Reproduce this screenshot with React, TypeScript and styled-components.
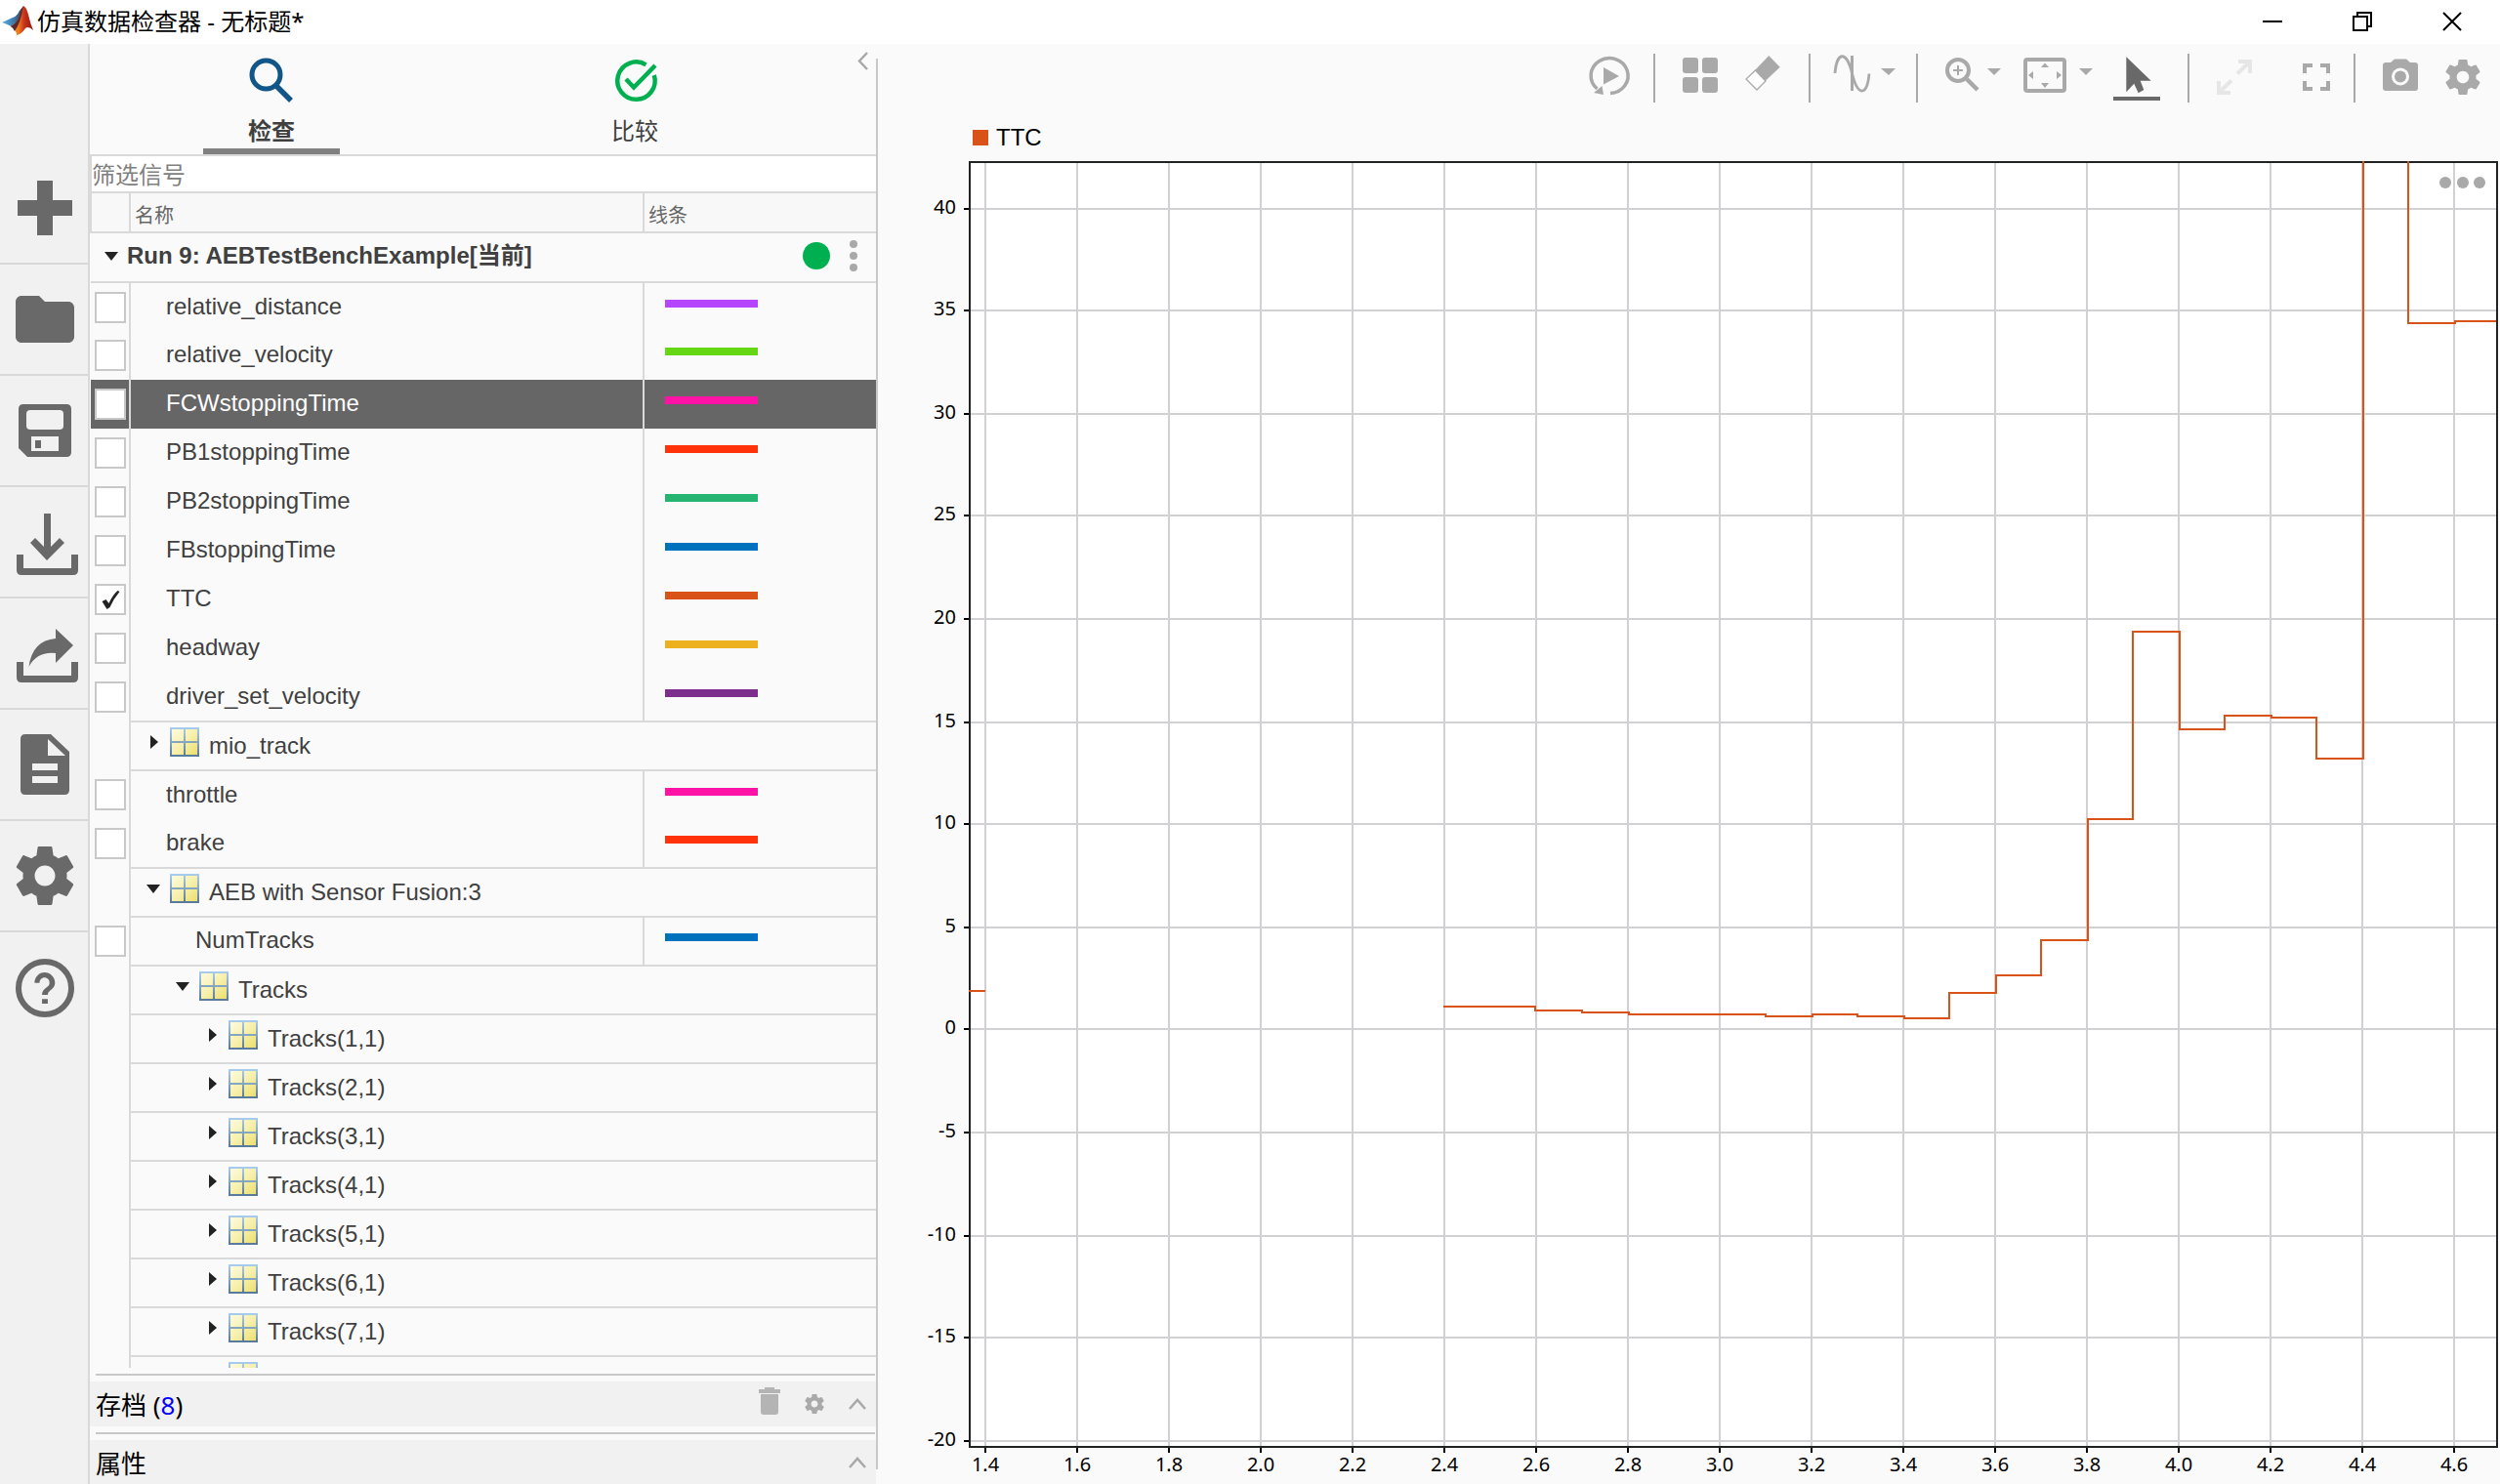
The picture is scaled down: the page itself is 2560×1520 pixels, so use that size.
import React from 'react';
import styled, { createGlobalStyle } from 'styled-components';

const LINE = '#d9d9d9';
const ICON = '#a9a9a9';
const DARK = '#696969';
const SIGNAL = '#d95319';

const arial = `"Liberation Sans", "Noto Sans CJK SC", sans-serif`;
const ui = `"Noto Sans", "Noto Sans CJK SC", sans-serif`;

const GlobalStyle = createGlobalStyle`
  * { box-sizing: border-box; }
  body { margin: 0; background: #fafafa; color: #404040; font-family: ${arial}; }
  button { margin: 0; padding: 0; border: 0; background: none; color: inherit; font: inherit; }
  svg { display: block; }
`;

const Window = styled.div`
  display: flex;
  flex-direction: column;
  height: 100vh;
  overflow: hidden;
`;

const TitleBar = styled.header`
  display: flex;
  align-items: center;
  height: 45px;
  flex: none;
  padding: 0 3px 2px 2px;
  background: #fff;
  color: #000;
`;

const Title = styled.h1`
  flex: 1;
  margin: 0;
  font: 400 24px/32px ${ui};
`;

const WindowButton = styled.button`
  width: 92px;
  height: 42px;
  svg { margin: auto; }
`;

const Body = styled.div`
  display: flex;
  flex: 1;
  min-height: 0;
`;

const Rail = styled.nav`
  flex: none;
  width: 92px;
  padding-top: 112px;
  background: #f1f1f1;
  border-right: 2px solid ${LINE};
`;

const RailButton = styled.button`
  display: block;
  width: 90px;
  height: 114px;
  border-bottom: 2px solid ${LINE};
  color: ${DARK};
  &:last-child { border-bottom: 0; }
`;

const Panel = styled.section`
  display: flex;
  flex-direction: column;
  flex: none;
  width: 805px;
`;

const Splitter = styled.div`
  flex: none;
  width: 2px;
  margin: 15px 0;
  background: #c8c8c8;
`;

const Tabs = styled.div`
  display: flex;
  flex: none;
  height: 115px;
  border-bottom: 2px solid ${LINE};
`;

const TabSlot = styled.div`
  display: flex;
  justify-content: center;
  width: 372px;
`;

const Tab = styled.button<{ $active?: boolean }>`
  display: flex;
  flex-direction: column;
  align-items: center;
  gap: 10px;
  width: 140px;
  padding-top: 12px;
  border-bottom: 6px solid ${(p) => (p.$active ? '#808080' : 'transparent')};
  font-size: 24px;
  line-height: 32px;
  font-weight: ${(p) => (p.$active ? 700 : 400)};
`;

const CollapseButton = styled.button`
  flex: 1;
  align-self: flex-start;
`;

const Filter = styled.input`
  flex: none;
  width: 100%;
  height: 38px;
  padding: 3px 0 0;
  border: 0 solid ${LINE};
  border-width: 0 0 2px 2px;
  background: #fff;
  outline: 0;
  font: 24px/32px ${arial};
  &::placeholder { color: #808080; opacity: 1; }
`;

const Scroller = styled.div`
  flex: 1;
  min-height: 0;
  overflow: hidden;
`;

const SignalTable = styled.table`
  width: 100%;
  table-layout: fixed;
  border-collapse: collapse;
  font-size: 24px;
  line-height: 28px;
`;

const CheckCol = styled.col`width: 40px;`;
const NameCol = styled.col`width: 526px;`;

const HeadCell = styled.th`
  height: 40px;
  padding: 6px 0 0 4px;
  border: 2px solid ${LINE};
  border-top: 0;
  border-right: 0;
  background: #f8f8f8;
  color: #666;
  font-size: 20px;
  line-height: 24px;
  font-weight: 400;
  text-align: left;
`;

const RunCell = styled.td`
  height: 51px;
  padding: 0;
  border-bottom: 2px solid ${LINE};
`;

const RunRow = styled.div`
  display: flex;
  align-items: center;
  padding: 0 11px 4px 13px;
  font-weight: 700;
`;

const RunName = styled.span`
  flex: 1;
  margin-left: 8px;
`;

const StatusDot = styled.span`
  width: 28px;
  height: 28px;
  border-radius: 50%;
  background: #00b050;
`;

const KebabButton = styled.button`
  margin-left: 12px;
`;

const Row = styled.tr<{ $selected?: boolean }>`
  background: ${(p) => (p.$selected ? '#666' : 'transparent')};
  color: ${(p) => (p.$selected ? '#fff' : 'inherit')};
`;

const CheckCell = styled.td`
  height: 50px;
  padding: 0;
  border-right: 2px solid ${LINE};
`;

const CheckBox = styled.input`
  display: block;
  appearance: none;
  width: 32px;
  height: 32px;
  margin: 0 auto;
  border: 2px solid #c8c8c8;
  background: #fff;
  &:checked::before {
    content: '';
    display: block;
    width: 28px;
    height: 28px;
    background: #222;
    clip-path: path('M6 16 L10 14 L13 18 Q17 9 22 5 L24 6 Q18 13 14 22 L11 24 Z');
  }
`;

const NameCell = styled.td<{ $depth: number }>`
  padding: 0 0 2px ${(p) => 36 + p.$depth * 30}px;
  border-right: 2px solid ${LINE};
`;

const GroupCell = styled.td`
  padding: 0;
  border: 2px solid ${LINE};
  border-right: 0;
`;

const GroupRow = styled.div<{ $depth: number }>`
  display: flex;
  align-items: center;
  height: 46px;
  padding-left: ${(p) => 15 + p.$depth * 30}px;
`;

const CaretButton = styled.button`
  width: 16px;
  margin: 0 9px 8px 0;
`;

const BusIcon = styled.svg`
  width: 30px;
  height: 30px;
  margin: 0 10px 8px 0;
`;

const LineCell = styled.td`
  padding: 0 0 8px 21px;
`;

const Swatch = styled.span<{ $color: string }>`
  display: block;
  width: 95px;
  height: 8px;
  background: ${(p) => p.$color};
`;

const Rule = styled.hr`
  flex: none;
  width: 798px;
  height: 2px;
  margin: 6px 0 6px 6px;
  border: 0;
  background: #c8c8c8;
`;

const Drawer = styled.div`
  display: flex;
  align-items: center;
  gap: 15px;
  flex: none;
  height: 46px;
  padding: 0 10px 0 6px;
  background: #f1f1f1;
  color: #000;
  font: 26px/36px ${ui};
  &:last-child { height: 45px; }
`;

const DrawerTitle = styled.span`
  flex: 1;
  padding-top: 2px;
`;

const CountLink = styled.a`
  color: #00f;
  text-decoration: none;
`;

const Viewer = styled.main`
  display: flex;
  flex-direction: column;
  flex: 1;
  min-width: 0;
`;

const Toolbar = styled.div`
  display: flex;
  justify-content: flex-end;
  flex: none;
  height: 65px;
  padding-top: 5px;
`;

const ToolButton = styled.button<{ $tone?: string }>`
  height: 60px;
  color: ${(p) => p.$tone ?? ICON};
`;

const Separator = styled.span`
  width: 2px;
  height: 50px;
  margin-top: 5px;
  background: ${ICON};
`;

const Legend = styled.div`
  display: flex;
  align-items: center;
  gap: 8px;
  flex: none;
  height: 55px;
  padding: 7px 0 0 97px;
  color: #000;
  font: 24px/32px ${arial};
`;

const LegendMark = styled.span`
  width: 16px;
  height: 16px;
  background: ${SIGNAL};
`;

const ChartBox = styled.div`
  position: relative;
  flex: 1;
  min-height: 0;
`;

const Chart = styled.svg`
  width: 100%;
  height: 100%;
`;

const AxisText = styled.text`
  font: 20px ${ui};
  fill: #000;
`;

const ChartMenu = styled.button`
  position: absolute;
  top: 9px;
  right: 9px;
  color: ${ICON};
`;

/* ---------- left rail ---------- */

const railIcons: { label: string; art: React.ReactNode }[] = [
  { label: '新建', art: <path d="M38 28H54V48H74V64H54V84H38V64H18V48H38Z" /> },
  {
    label: '打开',
    art: (
      <path
        transform="translate(10 20) scale(3)"
        d="M10 4H4c-1.1 0-1.99.9-1.99 2L2 18c0 1.1.9 2 2 2h16c1.1 0 2-.9 2-2V8c0-1.1-.9-2-2-2h-8l-2-2z"
      />
    ),
  },
  {
    label: '保存',
    art: (
      <>
        <path d="M24 29H68Q73 29 73 34V78Q73 83 68 83H28L19 74V34Q19 29 24 29Z" />
        <rect x="27" y="35" width="38" height="20" rx="4" fill="#f1f1f1" />
        <rect x="32" y="62" width="28" height="15" fill="#f1f1f1" />
        <rect x="36" y="66" width="6" height="8" />
      </>
    ),
  },
  {
    label: '导入',
    art: (
      <>
        <path d="M17 69H24V83H73V69H80V85Q80 90 75 90H22Q17 90 17 85Z" />
        <path d="M45 27H52V61L61 52L66 57L48 75L31 57L36 52L45 61Z" />
      </>
    ),
  },
  {
    label: '导出',
    art: (
      <>
        <path d="M17 65H24V79H73V65H80V81Q80 86 75 86H22Q17 86 17 81Z" />
        <path d="M57 31L75 48L57 66V56Q38 54 29.500 70Q33 43 57 41Z" />
      </>
    ),
  },
  {
    label: '报告',
    art: (
      <>
        <path d="M26 25H52L71 43V82Q71 87 66 87H26Q21 87 21 82V30Q21 25 26 25Z" />
        <path d="M49 30V47H67Z" fill="#f1f1f1" />
        <path d="M33 55H59V62H33ZM33 68H59V75H33Z" fill="#f1f1f1" />
      </>
    ),
  },
  { label: '预设项', art: <g transform="translate(10 20) scale(3)"><GearShape /></g> },
  {
    label: '帮助',
    art: (
      <>
        <circle cx="46" cy="56" r="27" fill="none" stroke="currentColor" strokeWidth="6" />
        <path
          transform="translate(15 24) scale(2.55 2.67)"
          d="M11 18h2.300v-1.800h-2.300zM12 6c-2.210 0-4 1.790-4 4h2c0-1.100.9-2 2-2s2 .9 2 2c0 2-3 1.750-3 4.600h2.300c0-1.900 2.900-2.100 2.900-4.600 0-2.210-1.890-4-4.200-4z"
        />
      </>
    ),
  },
];

function GearShape() {
  return (
    <path d="M19.430 12.980c.04-.32.07-.64.07-.98s-.03-.66-.07-.98l2.110-1.650c.19-.15.24-.42.12-.64l-2-3.460c-.12-.22-.39-.3-.61-.22l-2.490 1c-.52-.4-1.080-.73-1.690-.98l-.38-2.650C14.460 2.180 14.250 2 14 2h-4c-.25 0-.46.18-.49.42l-.38 2.650c-.61.25-1.170.59-1.690.98l-2.490-1c-.23-.09-.49 0-.61.22l-2 3.460c-.13.22-.07.49.12.64l2.110 1.650c-.04.32-.07.65-.07.98s.03.66.07.98l-2.110 1.650c-.19.15-.24.42-.12.64l2 3.460c.12.22.39.3.61.22l2.490-1c.52.4 1.080.73 1.690.98l.38 2.650c.03.24.24.42.49.42h4c.25 0 .46-.18.49-.42l.38-2.650c.61-.25 1.170-.59 1.690-.98l2.490 1c.23.09.49 0 .61-.22l2-3.460c.12-.22.07-.49-.12-.64l-2.110-1.650zM12 15.500c-1.930 0-3.500-1.570-3.500-3.500s1.570-3.500 3.500-3.500 3.500 1.570 3.500 3.500-1.570 3.500-3.500 3.500z" />
  );
}

function Logo() {
  return (
    <svg width="36" height="36" viewBox="0 0 36 36" aria-hidden="true">
      <defs>
        <linearGradient id="peak" x1="0" x2="1" y1="0" y2="0">
          <stop offset="0" stopColor="#f6a623" />
          <stop offset="0.35" stopColor="#ef7a1c" />
          <stop offset="0.6" stopColor="#c8321c" />
          <stop offset="1" stopColor="#8e1a12" />
        </linearGradient>
        <linearGradient id="slope" x1="0" x2="1" y1="0" y2="0">
          <stop offset="0" stopColor="#59b0e6" />
          <stop offset="0.6" stopColor="#3b74a8" />
          <stop offset="1" stopColor="#2b3a52" />
        </linearGradient>
      </defs>
      <path d="M0 19L11 14Q15 13 18 7Q20 4 22 3L18 18L12 25Q9 22 0 19Z" fill="url(#slope)" />
      <path d="M22 2Q25 3 27 11Q29 20 32 27Q27 22 24 25Q20 31 15 32Q15 27 9 23Q15 20 18 12Q20 4 22 2Z" fill="url(#peak)" />
      <path d="M22 2Q20 4 18 12Q15 20 9 23Q12 25 13 28Q19 20 22 2Z" fill="#5c2a2e" />
    </svg>
  );
}

/* ---------- signal table ---------- */

type Item =
  | { kind: 'signal'; name: string; color: string; depth?: number; checked?: boolean; selected?: boolean }
  | { kind: 'group'; name: string; depth: number; open?: boolean };

const items: Item[] = [
  { kind: 'signal', name: 'relative_distance', color: '#b545ff' },
  { kind: 'signal', name: 'relative_velocity', color: '#65d614' },
  { kind: 'signal', name: 'FCWstoppingTime', color: '#ff13a6', selected: true },
  { kind: 'signal', name: 'PB1stoppingTime', color: '#ff320a' },
  { kind: 'signal', name: 'PB2stoppingTime', color: '#25b573' },
  { kind: 'signal', name: 'FBstoppingTime', color: '#0072bd' },
  { kind: 'signal', name: 'TTC', color: '#d95319', checked: true },
  { kind: 'signal', name: 'headway', color: '#edb120' },
  { kind: 'signal', name: 'driver_set_velocity', color: '#7e2f8e' },
  { kind: 'group', name: 'mio_track', depth: 0 },
  { kind: 'signal', name: 'throttle', color: '#ff13a6' },
  { kind: 'signal', name: 'brake', color: '#ff320a' },
  { kind: 'group', name: 'AEB with Sensor Fusion:3', depth: 0, open: true },
  { kind: 'signal', name: 'NumTracks', color: '#0072bd', depth: 1 },
  { kind: 'group', name: 'Tracks', depth: 1, open: true },
  ...[1, 2, 3, 4, 5, 6, 7].map((n): Item => ({ kind: 'group', name: `Tracks(${n},1)`, depth: 2 })),
  { kind: 'group', name: '', depth: 2 },
];

function Caret({ open }: { open?: boolean }) {
  return (
    <svg width="16" height="16" viewBox="0 0 16 16" fill="#222" aria-hidden="true">
      <path d={open ? 'M1 4H15L8 13Z' : 'M5 1L13 8L5 15Z'} />
    </svg>
  );
}

function Bus() {
  return (
    <BusIcon viewBox="0 0 30 30" aria-hidden="true">
      <defs>
        <linearGradient id="busFrame" x1="0" x2="0" y1="0" y2="1">
          <stop offset="0" stopColor="#a9cdef" />
          <stop offset="0.5" stopColor="#84a6be" />
          <stop offset="1" stopColor="#56779a" />
        </linearGradient>
        <linearGradient id="busPane" gradientUnits="userSpaceOnUse" x1="0" y1="0" x2="30" y2="30">
          <stop offset="0" stopColor="#fffde6" />
          <stop offset="0.5" stopColor="#f7f0ae" />
          <stop offset="1" stopColor="#ebdc62" />
        </linearGradient>
      </defs>
      <rect width="30" height="30" fill="url(#busFrame)" />
      <path d="M2 2H14V14H2ZM16 2H28V14H16ZM2 16H14V28H2ZM16 16H28V28H16Z" fill="url(#busPane)" />
    </BusIcon>
  );
}

function ItemRow({ item, index }: { item: Item; index: number }) {
  if (item.kind === 'group') {
    return (
      <Row>
        <CheckCell />
        <GroupCell colSpan={2}>
          <GroupRow $depth={item.depth}>
            <CaretButton aria-label={item.open ? '折叠' : '展开'}>
              <Caret open={item.open} />
            </CaretButton>
            <Bus />
            <span>{item.name}</span>
          </GroupRow>
        </GroupCell>
      </Row>
    );
  }
  const id = `signal-${index}`;
  return (
    <Row $selected={item.selected}>
      <CheckCell>
        <CheckBox type="checkbox" id={id} defaultChecked={item.checked} />
      </CheckCell>
      <NameCell $depth={item.depth ?? 0}>
        <label htmlFor={id}>{item.name}</label>
      </NameCell>
      <LineCell>
        <Swatch $color={item.color} />
      </LineCell>
    </Row>
  );
}

/* ---------- toolbar ---------- */

function Tool({ label, width, tone, children }: { label: string; width: number; tone?: string; children: React.ReactNode }) {
  return (
    <ToolButton aria-label={label} $tone={tone}>
      <svg width={width} height="60" viewBox={`0 0 ${width} 60`} fill="currentColor">
        {children}
      </svg>
    </ToolButton>
  );
}

function ViewerToolbar() {
  return (
    <Toolbar>
      <Tool label="重播" width={75}>
        <path d="M31 45.500A19 18 0 1 0 17.500 41" fill="none" stroke="currentColor" strokeWidth="3.500" />
        <path d="M14 45L24 47L22.500 38Z" />
        <path d="M24 19L40 28L24 36.500Z" />
      </Tool>
      <Separator />
      <Tool label="布局" width={82}>
        <rect x="28" y="9" width="16" height="16" rx="3" />
        <rect x="48" y="9" width="16" height="16" rx="3" />
        <rect x="28" y="29" width="16" height="16" rx="3" />
        <rect x="48" y="29" width="16" height="16" rx="3" />
      </Tool>
      <Tool label="清除" width={75}>
        <path d="M34.300 7L45.700 18.700L30 33.500L20 22Z" />
        <path d="M20.500 22L11 31L22 42L31 33Z" fill="#fff" stroke="currentColor" strokeWidth="1.300" />
      </Tool>
      <Separator />
      <Tool label="游标" width={108}>
        <path d="M25 25C27 2 37 2 42.500 25C48 48 58 50 60 25.500" fill="none" stroke="currentColor" strokeWidth="2.800" />
        <rect x="41" y="7" width="3" height="36" />
        <path d="M72 20H87L80 27Z" />
      </Tool>
      <Separator />
      <Tool label="缩放" width={98}>
        <circle cx="41" cy="22" r="11" fill="none" stroke="currentColor" strokeWidth="4" />
        <path d="M36 22H46M41 17V27" stroke="currentColor" strokeWidth="2" />
        <path d="M50 31L61 42" stroke="currentColor" strokeWidth="4.500" />
        <path d="M71 20H85L78 27Z" />
      </Tool>
      <Tool label="适应视图" width={94}>
        <rect x="12" y="11" width="40" height="32" rx="2" fill="none" stroke="currentColor" strokeWidth="4" />
        <path d="M28 19H36L32 14.500ZM28 35H36L32 40ZM20 23V31L15 27ZM44 23V31L49 27Z" />
        <path d="M67 20H81L74 27Z" />
      </Tool>
      <Tool label="选择" width={84} tone={DARK}>
        <path d="M21.300 8.300L46.700 32.700H35.700L39.300 42L33.700 45.300L29.300 35.700L21.300 44.300Z" />
        <rect x="8" y="49" width="48" height="4" />
      </Tool>
      <Separator />
      <Tool label="最大化" width={94} tone="#e6e6e6">
        <path d="M50 13H62V25M61 14L49 25.500M30 33V45H42M31 44L43 32.500" fill="none" stroke="currentColor" strokeWidth="4" />
      </Tool>
      <Tool label="全屏" width={74}>
        <path d="M24 25V17H32M40 17H48V25M48 33V41H40M32 41H24V33" fill="none" stroke="currentColor" strokeWidth="4" />
      </Tool>
      <Separator />
      <Tool label="快照" width={80}>
        <path d="M31 14H36L40 10.500H52L56 14H61Q64 14 64 17V40Q64 43 61 43H31Q28 43 28 40V17Q28 14 31 14Z" />
        <circle cx="46" cy="28.500" r="9" fill="#fafafa" />
        <circle cx="46" cy="28.500" r="6" />
      </Tool>
      <Tool label="设置" width={68}>
        <g transform="translate(8.400 7.400) scale(1.800)">
          <GearShape />
        </g>
      </Tool>
    </Toolbar>
  );
}

/* ---------- chart ---------- */

const X_TICKS = Array.from({ length: 17 }, (_, i) => i);
const Y_TICKS = [40, 35, 30, 25, 20, 15, 10, 5, 0, -5, -10, -15, -20];
const tickX = (i: number) => 110 + i * 94;
const tickY = (v: number) => 2 * Math.round((889.9 - v * 21.04) / 2 - 0.5) + 1;

/* [start of the step, level] pairs of the stair plot */
const steps: [number, number][] = [
  [579, 866], [673, 870], [721, 872], [769, 874], [909, 876], [957, 874], [1003, 876],
  [1051, 878], [1097, 852], [1145, 834], [1191, 798], [1239, 674], [1285, 482], [1333, 582],
  [1379, 568], [1427, 570], [1473, 612], [1521, 0], [1567, 166], [1615, 164],
];

const stairs = steps.map(([x, y], i) => `${i ? `H${x}V${y}` : `M${x} ${y}`}`).join('') + 'H1657';
const [beforePeak, afterPeak] = stairs.split('H1567');

function TtcChart() {
  return (
    <Chart viewBox="0 0 1661 1355" preserveAspectRatio="xMidYMin meet" role="img" aria-label="TTC">
      <rect x="94" y="1" width="1564" height="1316" fill="#fff" />
      <g stroke="#d1d1d3" strokeWidth="2">
        {X_TICKS.map((i) => <path key={i} d={`M${tickX(i)} 1V1317`} />)}
        {Y_TICKS.map((v) => <path key={v} d={`M94 ${tickY(v)}H1658`} />)}
      </g>
      <g stroke="#000" strokeWidth="2">
        {X_TICKS.map((i) => <path key={i} d={`M${tickX(i)} 1318V1323`} />)}
        {Y_TICKS.map((v) => <path key={v} d={`M88 ${tickY(v)}H93`} />)}
      </g>
      <rect x="94" y="1" width="1564" height="1316" fill="none" stroke="#1f2323" strokeWidth="2" />
      <g fill="none" stroke={SIGNAL} strokeWidth="2">
        <path d="M93 850H110" />
        <path d={beforePeak} />
        <path d={`M1567 0${afterPeak}`} />
      </g>
      {X_TICKS.map((i) => (
        <AxisText key={i} x={tickX(i)} y="1342" textAnchor="middle">{(1.4 + i * 0.2).toFixed(1)}</AxisText>
      ))}
      {Y_TICKS.map((v) => (
        <AxisText key={v} x="80" y={tickY(v) + 5} textAnchor="end">{v}</AxisText>
      ))}
    </Chart>
  );
}

function Chevron() {
  return (
    <svg width="18" height="12" viewBox="0 0 18 12" fill="none" stroke={ICON} strokeWidth="2.500">
      <path d="M1 11L9 2L17 11" />
    </svg>
  );
}

export default function App() {
  return (
    <Window>
      <GlobalStyle />
      <TitleBar>
        <Logo />
        <Title>仿真数据检查器 - 无标题*</Title>
        <WindowButton aria-label="最小化">
          <svg width="20" height="20" viewBox="0 0 20 20"><path d="M0 10H20" stroke="#000" strokeWidth="2" /></svg>
        </WindowButton>
        <WindowButton aria-label="还原">
          <svg width="20" height="20" viewBox="0 0 20 20" fill="none" stroke="#000" strokeWidth="2">
            <path d="M1 5H15V19H1ZM5 5V1H19V15H15" />
          </svg>
        </WindowButton>
        <WindowButton aria-label="关闭">
          <svg width="20" height="20" viewBox="0 0 20 20"><path d="M1 1L19 19M19 1L1 19" stroke="#000" strokeWidth="2" /></svg>
        </WindowButton>
      </TitleBar>

      <Body>
        <Rail>
          {railIcons.map((icon) => (
            <RailButton key={icon.label} aria-label={icon.label}>
              <svg width="90" height="112" viewBox="0 0 90 112" fill="currentColor">{icon.art}</svg>
            </RailButton>
          ))}
        </Rail>

        <Panel>
          <Tabs>
            <TabSlot>
              <Tab $active>
                <svg width="52" height="52" viewBox="0 0 52 52" fill="none" stroke="#125687" strokeWidth="5">
                  <circle cx="20.500" cy="19.500" r="14.500" />
                  <path d="M30 30L46 46" strokeWidth="5.500" />
                </svg>
                检查
              </Tab>
            </TabSlot>
            <TabSlot>
              <Tab>
                <svg width="52" height="52" viewBox="0 0 52 52" fill="none" stroke="#00b050" strokeWidth="4.500">
                  <path d="M45.800 20A19.200 19.200 0 1 1 37.500 9.300" />
                  <path d="M17 24L25 32.500L47 10" />
                </svg>
                比较
              </Tab>
            </TabSlot>
            <CollapseButton aria-label="折叠面板">
              <svg width="61" height="34" viewBox="0 0 61 34" fill="none" stroke={ICON} strokeWidth="2.500">
                <path d="M52 9L44 17.500L52 26" />
              </svg>
            </CollapseButton>
          </Tabs>
          <Filter type="text" placeholder="筛选信号" aria-label="筛选信号" />
          <Scroller>
            <SignalTable>
              <colgroup>
                <CheckCol />
                <NameCol />
                <col />
              </colgroup>
              <thead>
                <tr>
                  <HeadCell />
                  <HeadCell>名称</HeadCell>
                  <HeadCell>线条</HeadCell>
                </tr>
              </thead>
              <tbody>
                <tr>
                  <RunCell colSpan={3}>
                    <RunRow>
                      <button aria-label="折叠"><Caret open /></button>
                      <RunName>Run 9: AEBTestBenchExample[当前]</RunName>
                      <StatusDot />
                      <KebabButton aria-label="更多">
                        <svg width="24" height="32" viewBox="0 0 24 32" fill={ICON}>
                          <circle cx="12" cy="4" r="4" />
                          <circle cx="12" cy="16" r="4" />
                          <circle cx="12" cy="28" r="4" />
                        </svg>
                      </KebabButton>
                    </RunRow>
                  </RunCell>
                </tr>
                {items.map((item, i) => <ItemRow key={i} item={item} index={i} />)}
              </tbody>
            </SignalTable>
          </Scroller>
          <Rule />
          <Drawer>
            <DrawerTitle>存档 (<CountLink href="#archive">8</CountLink>)</DrawerTitle>
            <button aria-label="删除">
              <svg width="22" height="36" viewBox="0 0 22 36" fill="#b4b4b4">
                <path d="M0 3H6V1H16V3H22V7H0ZM2 8H20V26Q20 29 17 29H5Q2 29 2 26Z" />
              </svg>
            </button>
            <button aria-label="存档设置">
              <svg width="40" height="24" viewBox="0 0 40 24" fill={ICON}><g transform="translate(8 0)"><GearShape /></g></svg>
            </button>
            <button aria-label="展开存档"><Chevron /></button>
          </Drawer>
          <Rule />
          <Drawer>
            <DrawerTitle>属性</DrawerTitle>
            <button aria-label="展开属性"><Chevron /></button>
          </Drawer>
        </Panel>
        <Splitter />

        <Viewer>
          <ViewerToolbar />
          <Legend><LegendMark />TTC</Legend>
          <ChartBox>
            <TtcChart />
            <ChartMenu aria-label="图选项">
              <svg width="60" height="26" viewBox="0 0 60 26" fill="currentColor">
                <circle cx="13" cy="13" r="6" />
                <circle cx="31" cy="13" r="6" />
                <circle cx="48" cy="13" r="6" />
              </svg>
            </ChartMenu>
          </ChartBox>
        </Viewer>
      </Body>
    </Window>
  );
}
